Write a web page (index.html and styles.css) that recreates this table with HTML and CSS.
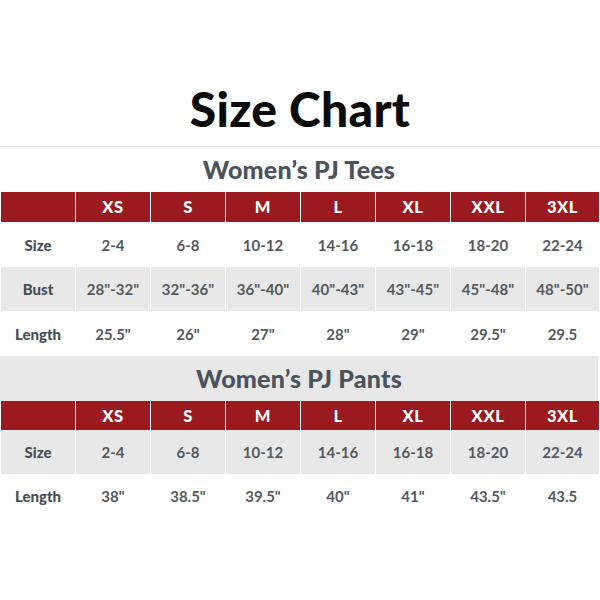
FILE: index.html
```html
<!DOCTYPE html>
<html>
<head>
<meta charset="utf-8">
<link rel="stylesheet" href="styles.css">
</head>
<body>
<div class="page">
  <h1 class="title">Size Chart</h1>
  <div class="rule"></div>

  <div class="band">Women’s PJ Tees</div>
  <div class="table">
    <div class="row head h30">
      <div class="cell"></div><div class="cell">XS</div><div class="cell">S</div><div class="cell">M</div><div class="cell">L</div><div class="cell">XL</div><div class="cell">XXL</div><div class="cell">3XL</div>
    </div>
    <div class="row h45">
      <div class="cell label">Size</div><div class="cell">2-4</div><div class="cell">6-8</div><div class="cell">10-12</div><div class="cell">14-16</div><div class="cell">16-18</div><div class="cell">18-20</div><div class="cell">22-24</div>
    </div>
    <div class="row shaded h44">
      <div class="cell label">Bust</div><div class="cell">28"-32"</div><div class="cell">32"-36"</div><div class="cell">36"-40"</div><div class="cell">40"-43"</div><div class="cell">43"-45"</div><div class="cell">45"-48"</div><div class="cell">48"-50"</div>
    </div>
    <div class="row h45">
      <div class="cell label">Length</div><div class="cell">25.5"</div><div class="cell">26"</div><div class="cell">27"</div><div class="cell">28"</div><div class="cell">29"</div><div class="cell">29.5"</div><div class="cell">29.5</div>
    </div>
  </div>

  <div class="band shaded-band">Women’s PJ Pants</div>
  <div class="table">
    <div class="row head h29">
      <div class="cell"></div><div class="cell">XS</div><div class="cell">S</div><div class="cell">M</div><div class="cell">L</div><div class="cell">XL</div><div class="cell">XXL</div><div class="cell">3XL</div>
    </div>
    <div class="row shaded h44">
      <div class="cell label">Size</div><div class="cell">2-4</div><div class="cell">6-8</div><div class="cell">10-12</div><div class="cell">14-16</div><div class="cell">16-18</div><div class="cell">18-20</div><div class="cell">22-24</div>
    </div>
    <div class="row h44">
      <div class="cell label">Length</div><div class="cell">38"</div><div class="cell">38.5"</div><div class="cell">39.5"</div><div class="cell">40"</div><div class="cell">41"</div><div class="cell">43.5"</div><div class="cell">43.5</div>
    </div>
  </div>
</div>
</body>
</html>
```

FILE: styles.css
```css
html, body {
  margin: 0;
  padding: 0;
  background: #ffffff;
}

.page {
  width: 600px;
  height: 600px;
  font-family: Lato, "Open Sans", "DejaVu Sans", sans-serif;
}

.title {
  margin: 0;
  padding-top: 85px;
  height: 146px;
  box-sizing: border-box;
  font-size: 48px;
  line-height: 48px;
  font-weight: 900;
  color: #0b0b0b;
  text-align: center;
  letter-spacing: 0.3px;
}

.rule {
  height: 1px;
  background: #e2e2e2;
}

.band {
  width: 598px;
  height: 45px;
  display: flex;
  align-items: center;
  justify-content: center;
  font-size: 25px;
  line-height: 25px;
  font-weight: 900;
  color: #4b535c;
  letter-spacing: 0.2px;
}

.shaded-band {
  background: #e8e8e8;
}

.table {
  width: 598px;
}

.row {
  display: grid;
  grid-template-columns: repeat(7, 74px) 73px;
  column-gap: 1px;
  padding-left: 1px;
}

.h29 { height: 29px; }
.h30 { height: 30px; }
.h44 { height: 44px; }
.h45 { height: 45px; }

.cell {
  display: flex;
  align-items: center;
  justify-content: center;
  font-size: 15px;
  font-weight: 700;
  color: #545a60;
  white-space: nowrap;
}

.head .cell {
  background: #9b1a1f;
  color: #ffffff;
  font-size: 16.5px;
  font-weight: 900;
  letter-spacing: 0.6px;
}

.shaded .cell {
  background: #e8e8e8;
}

.cell.label {
  color: #474d54;
  font-weight: 900;
}
```
